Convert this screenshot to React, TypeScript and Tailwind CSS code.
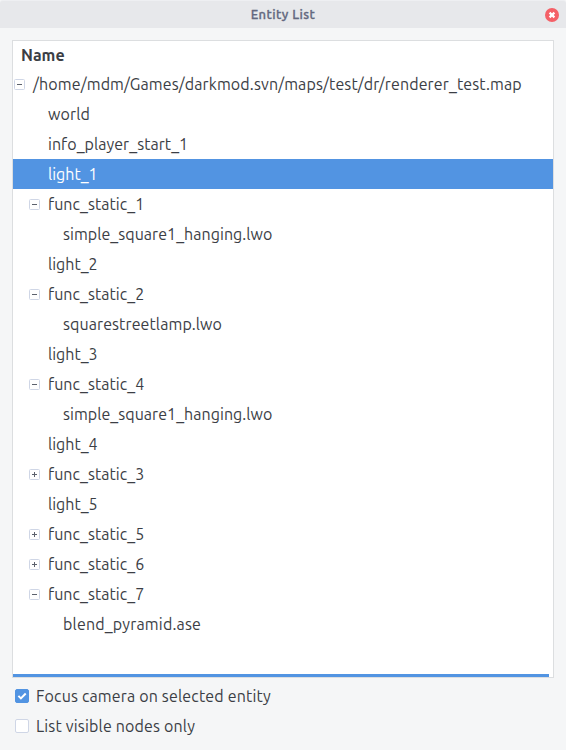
type Toggle = 'open' | 'closed' | null;

interface Row {
  label: string;
  depth: 0 | 1 | 2;
  toggle: Toggle;
  tracking: string;
  selected?: boolean;
}

const rows: Row[] = [
  { label: '/home/mdm/Games/darkmod.svn/maps/test/dr/renderer_test.map', depth: 0, toggle: 'open', tracking: 'tracking-[0.125px]' },
  { label: 'world', depth: 1, toggle: null, tracking: 'tracking-[0.15px]' },
  { label: 'info_player_start_1', depth: 1, toggle: null, tracking: 'tracking-[0.05px]' },
  { label: 'light_1', depth: 1, toggle: null, tracking: 'tracking-normal', selected: true },
  { label: 'func_static_1', depth: 1, toggle: 'open', tracking: 'tracking-[0.05px]' },
  { label: 'simple_square1_hanging.lwo', depth: 2, toggle: null, tracking: 'tracking-[0.05px]' },
  { label: 'light_2', depth: 1, toggle: null, tracking: 'tracking-normal' },
  { label: 'func_static_2', depth: 1, toggle: 'open', tracking: 'tracking-[0.05px]' },
  { label: 'squarestreetlamp.lwo', depth: 2, toggle: null, tracking: 'tracking-[0.09px]' },
  { label: 'light_3', depth: 1, toggle: null, tracking: 'tracking-normal' },
  { label: 'func_static_4', depth: 1, toggle: 'open', tracking: 'tracking-[0.05px]' },
  { label: 'simple_square1_hanging.lwo', depth: 2, toggle: null, tracking: 'tracking-[0.05px]' },
  { label: 'light_4', depth: 1, toggle: null, tracking: 'tracking-normal' },
  { label: 'func_static_3', depth: 1, toggle: 'closed', tracking: 'tracking-[0.05px]' },
  { label: 'light_5', depth: 1, toggle: null, tracking: 'tracking-normal' },
  { label: 'func_static_5', depth: 1, toggle: 'closed', tracking: 'tracking-[0.05px]' },
  { label: 'func_static_6', depth: 1, toggle: 'closed', tracking: 'tracking-[0.05px]' },
  { label: 'func_static_7', depth: 1, toggle: 'open', tracking: 'tracking-[0.05px]' },
  { label: 'blend_pyramid.ase', depth: 2, toggle: null, tracking: 'tracking-[0.18px]' },
];

const indent = { 0: 'pl-px', 1: 'pl-4', 2: 'pl-[31px]' };

function Expander({ state }: { state: Toggle }) {
  if (!state) return <span className="w-[11px] shrink-0" />;
  return (
    <svg className="h-[11px] w-[11px] shrink-0" viewBox="0 0 11 11" fill="none">
      <rect x="0.5" y="0.5" width="10" height="10" rx="1" fill="#fff" stroke="#cfd6e6" />
      <path d={state === 'open' ? 'M3 5.5h5' : 'M3 5.5h5M5.5 3v5'} stroke="#5c616c" />
    </svg>
  );
}

function TreeRow({ row }: { row: Row }) {
  return (
    <div className={`flex h-[30px] items-center ${indent[row.depth]} ${row.selected ? 'bg-[#5294e2] text-white' : ''}`}>
      <Expander state={row.toggle} />
      <span className={`ml-2 whitespace-nowrap ${row.tracking}`}>{row.label}</span>
    </div>
  );
}

function CheckRow({ label, checked, tracking }: { label: string; checked: boolean; tracking: string }) {
  return (
    <label className="flex h-[30px] items-center">
      <svg className="h-[14px] w-[14px] shrink-0" viewBox="0 0 14 14" fill="none">
        <rect x="0.5" y="0.5" width="13" height="13" rx="1.5" fill={checked ? '#5294e2' : '#fff'} stroke={checked ? '#5294e2' : '#cfd6e6'} />
        {checked && <path d="M3.4 6.9l2.5 2.5 4.8-4.9" stroke="#fff" strokeWidth="2" />}
      </svg>
      <span className={`ml-[7px] whitespace-nowrap ${tracking}`}>{label}</span>
    </label>
  );
}

export default function App() {
  return (
    <div className="flex h-[750px] w-[566px] flex-col bg-[#f5f6f7] font-['Ubuntu','Noto_Sans',sans-serif] text-[16px] leading-[30px] text-[#3b3e45]">
      <header className="grid h-7 shrink-0 grid-cols-[1fr_auto_1fr] items-center rounded-t-[3px] border-t border-[#eeeff2] bg-[#e7e8eb]">
        <span />
        <span className="text-[13px] font-medium leading-[27px] tracking-[0.42px] text-[#636980] [-webkit-text-stroke:0.3px_#636980]">Entity List</span>
        <button className="mr-[7px] justify-self-end" aria-label="Close">
          <svg className="h-[14px] w-[14px]" viewBox="0 0 14 14" fill="none">
            <circle cx="7" cy="7" r="7" fill="#f46067" />
            <path d="M4.6 4.6l4.8 4.8M9.4 4.6l-4.8 4.8" stroke="#fff" strokeWidth="2.2" />
          </svg>
        </button>
      </header>
      <main className="mx-3 mt-3 flex h-[638px] w-[542px] shrink-0 flex-col border border-[#dcdee0] bg-white">
        <div className="h-7 pl-2 font-bold leading-7">Name</div>
        <div className="flex-1">
          {rows.map((row, i) => (
            <TreeRow key={i} row={row} />
          ))}
        </div>
        <div className="mr-1 h-[3px] bg-[#5294e2]" />
      </main>
      <footer className="mt-[3px] pl-[15px]">
        <CheckRow label="Focus camera on selected entity" checked tracking="tracking-[0.16px]" />
        <CheckRow label="List visible nodes only" checked={false} tracking="tracking-[0.17px]" />
      </footer>
    </div>
  );
}
